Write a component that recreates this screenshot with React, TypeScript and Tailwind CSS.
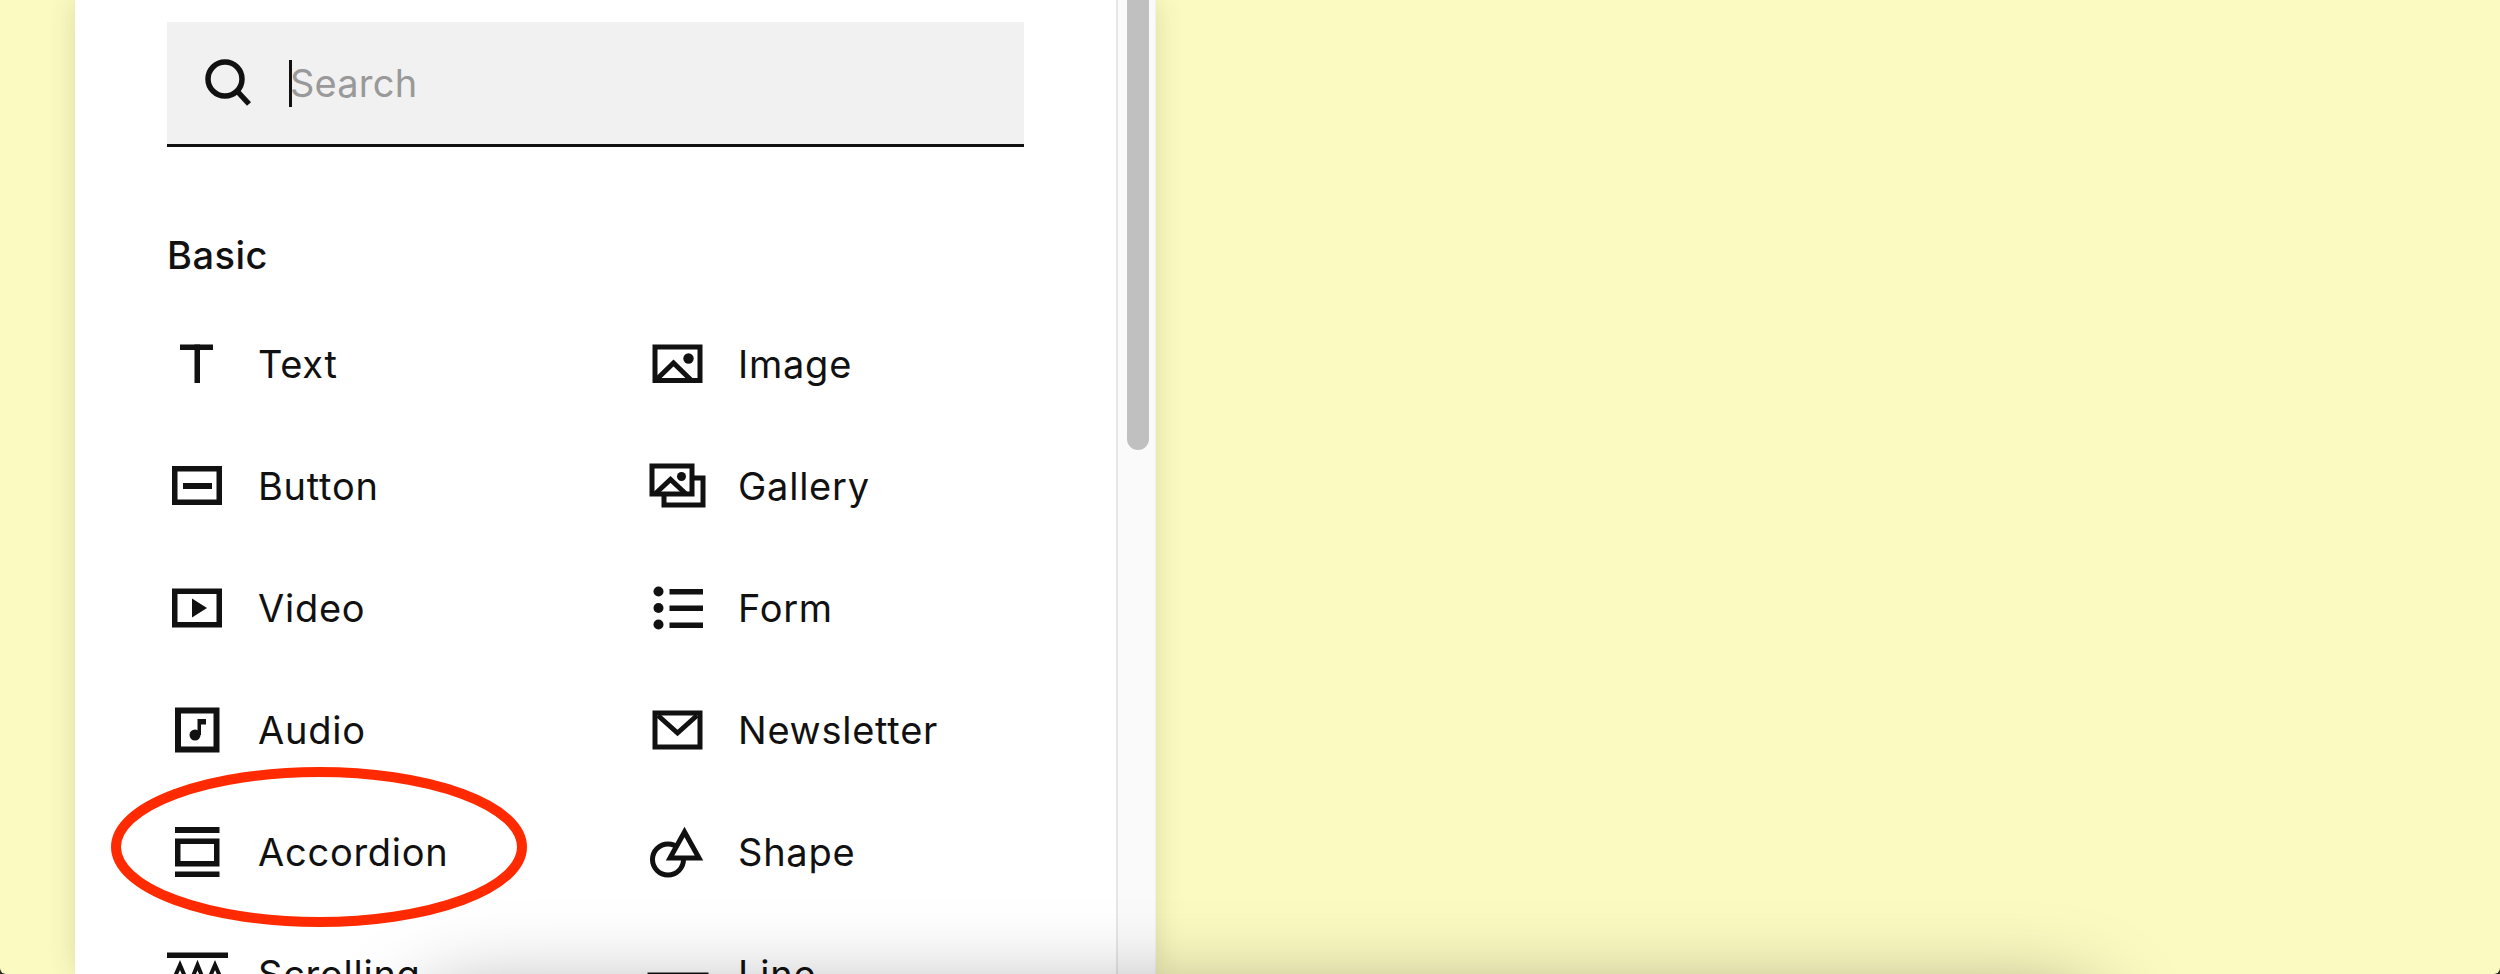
import React from "react";

const F = "#111111";

const Box = ({ children }: { children: React.ReactNode }) => (
  <svg viewBox="0 0 61 61" className="w-[61px] h-[61px] shrink-0 overflow-visible">
    {children}
  </svg>
);

const icons: Record<string, React.ReactNode> = {
  Text: (
    <Box>
      <rect x="13" y="10.5" width="33" height="5.5" fill={F} />
      <rect x="27.5" y="10.5" width="5.5" height="38.5" fill={F} />
    </Box>
  ),
  Image: (
    <Box>
      <rect x="8" y="13" width="45" height="33.5" fill="none" stroke={F} strokeWidth="5" />
      <circle cx="41.5" cy="24.5" r="5.2" fill={F} />
      <polyline points="9,46 26.5,29 44,46" fill="none" stroke={F} strokeWidth="5" />
    </Box>
  ),
  Button: (
    <Box>
      <rect x="7.75" y="12.75" width="44.5" height="33.5" fill="none" stroke={F} strokeWidth="5.5" />
      <rect x="16" y="27" width="29" height="6" fill={F} />
    </Box>
  ),
  Gallery: (
    <Box>
      <rect x="17" y="22" width="39" height="27" fill="none" stroke={F} strokeWidth="5" />
      <rect x="5" y="10" width="40" height="28" fill="#ffffff" stroke={F} strokeWidth="5" />
      <circle cx="34.5" cy="20.5" r="4.5" fill={F} />
      <polyline points="8,38 23.5,23.5 39,38" fill="none" stroke={F} strokeWidth="5" />
    </Box>
  ),
  Video: (
    <Box>
      <rect x="7.75" y="13.25" width="44.5" height="33.5" fill="none" stroke={F} strokeWidth="5.5" />
      <polygon points="25,20.5 40,30 25,39.5" fill={F} />
    </Box>
  ),
  Form: (
    <Box>
      <circle cx="11.5" cy="13.5" r="5" fill={F} />
      <circle cx="11.5" cy="30" r="5" fill={F} />
      <circle cx="11.5" cy="46.5" r="5" fill={F} />
      <rect x="22.5" y="11" width="33.5" height="5.5" fill={F} />
      <rect x="22.5" y="27.5" width="33.5" height="5.5" fill={F} />
      <rect x="22.5" y="44.5" width="33.5" height="5.5" fill={F} />
    </Box>
  ),
  Audio: (
    <Box>
      <rect x="11" y="10.5" width="38.5" height="39" fill="none" stroke={F} strokeWidth="6" />
      <circle cx="28" cy="35" r="5.5" fill={F} />
      <path d="M30.5 35V19H39V24.5H34V35Z" fill={F} />
    </Box>
  ),
  Newsletter: (
    <Box>
      <rect x="8" y="13" width="45" height="34" fill="none" stroke={F} strokeWidth="5" />
      <polyline points="11,15.5 30.5,33 50,15.5" fill="none" stroke={F} strokeWidth="5" />
    </Box>
  ),
  Accordion: (
    <Box>
      <rect x="8" y="5" width="44.5" height="6" fill={F} />
      <rect x="10.75" y="19.25" width="39" height="22.5" fill="none" stroke={F} strokeWidth="5.5" />
      <rect x="8" y="49.5" width="44.5" height="5.5" fill={F} />
    </Box>
  ),
  Shape: (
    <Box>
      <circle cx="21" cy="37.5" r="15.5" fill="none" stroke={F} strokeWidth="5" />
      <polygon points="37.5,10 23,36 52,36" fill="#ffffff" stroke={F} strokeWidth="5" />
    </Box>
  ),
  Scrolling: (
    <Box>
      <rect x="0" y="8.5" width="61" height="5.5" fill={F} />
      <polyline points="2,46 13,21 22,42 30.5,21 39,42 48,21 59,46" fill="none" stroke={F} strokeWidth="4" />
      <rect x="0" y="47" width="61" height="5.5" fill={F} />
    </Box>
  ),
  Line: (
    <Box>
      <rect x="0.5" y="28.5" width="61" height="5.5" fill={F} />
    </Box>
  ),
};

const names = ["Text", "Image", "Button", "Gallery", "Video", "Form", "Audio", "Newsletter", "Accordion", "Shape", "Scrolling", "Line"];

export default function App() {
  return (
    <div className="w-[2500px] h-[974px] overflow-hidden bg-[#2a2a2a]">
      <div className="relative w-full h-full overflow-hidden rounded-b-[6px] bg-[#fbfac1] font-['Inter','Liberation_Sans',sans-serif] text-[#111111]">
        <div className="ml-[75px] w-[1081px] h-full flex bg-white shadow-[0_0_26px_rgba(60,60,0,0.16)]">
          <div className="w-[1041px] pt-[22px] pl-[92px]">
            <div className="w-[857px] h-[125px] flex items-center bg-[#f1f1f1] border-b-[3px] border-[#111111] pl-[37px]">
              <svg viewBox="0 0 50 50" className="w-[50px] h-[50px] shrink-0">
                <circle cx="21" cy="21" r="17" fill="none" stroke={F} strokeWidth="5.5" />
                <line x1="33" y1="33" x2="45" y2="46" stroke={F} strokeWidth="5.5" />
              </svg>
              <span className="w-[3px] h-[47px] ml-[35px] bg-[#111111] shrink-0" />
              <span className="text-[38px] leading-[47px] tracking-[0.2px] text-[#999999] -ml-[2px]">Search</span>
            </div>
            <div className="mt-[86px] text-[38px] leading-[44px] tracking-[0.5px] font-medium">Basic</div>
            <div className="grid grid-cols-[480px_1fr] auto-rows-[122px] mt-[26px]">
              {names.map((n) => (
                <div key={n} className="flex items-center gap-[30px] h-[122px]">
                  {icons[n]}
                  <span className="text-[38px] leading-[44px] tracking-[0.75px]">{n}</span>
                </div>
              ))}
            </div>
          </div>
          <div className="w-[40px] h-full bg-[#fafafa] border-l-[2px] border-r-[1px] border-l-[#e6e6e6] border-r-[#f0f0f0] pl-[9px]">
            <div className="w-[22px] h-[450px] rounded-b-full bg-[#c0c0c0]" />
          </div>
        </div>
        <svg className="absolute left-[111px] top-[767px] w-[416px] h-[160px]" viewBox="0 0 416 160">
          <ellipse cx="208" cy="80" rx="203" ry="75" fill="none" stroke="#ff2a00" strokeWidth="10" />
        </svg>
        <div className="absolute left-[420px] top-[1000px] w-[1680px] h-[200px] rounded-[40px] bg-[#888888] shadow-[0_0_90px_rgba(0,0,0,0.4)]" />
      </div>
    </div>
  );
}
